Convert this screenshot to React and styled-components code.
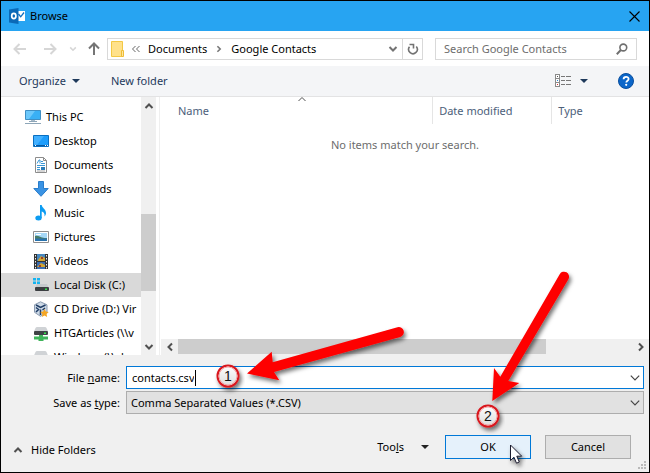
import { useState } from "react";
import styled, { createGlobalStyle, css } from "styled-components";

const GlobalStyle = createGlobalStyle`
  * {
    box-sizing: border-box;
  }
  body {
    margin: 0;
    background: #000;
  }
  body, button, input, select {
    font-family: "Noto Sans", "Open Sans", sans-serif;
    font-size: 11px;
    line-height: 16px;
    color: #000;
  }
`;

const Window = styled.div`
  position: relative;
  display: flex;
  flex-direction: column;
  height: 100vh;
  min-height: 360px;
  border: 1px solid #000;
  background: #f0f0f0;
  overflow: hidden;
`;

const PlainButton = styled.button`
  display: flex;
  align-items: center;
  padding: 0;
  border: 0;
  background: none;
  white-space: nowrap;
`;

/* title bar */

const TitleBar = styled.header`
  display: flex;
  align-items: center;
  gap: 5px;
  height: 30px;
  padding: 0 9px 0 8px;
  background: #27a4f2;
`;

const Title = styled.h1`
  flex: 1;
  margin: 0;
  font-size: 11px;
  font-weight: 400;
`;

/* address row */

const NavBar = styled.nav`
  display: flex;
  align-items: center;
  height: 35px;
  padding: 0 12px 0 5px;
  background: #fff;
`;

const NavButton = styled(PlainButton)`
  justify-content: center;
  width: ${(p) => p.$width}px;
  height: 22px;
`;

const AddressBar = styled.div`
  display: flex;
  align-items: center;
  flex: 1;
  height: 22px;
  margin-right: 12px;
  border: 1px solid #d9d9d9;
`;

const Crumbs = styled.div`
  display: flex;
  align-items: center;
  flex: 1;
  gap: 8px;
  padding-left: 3px;
`;

const RefreshButton = styled(NavButton)`
  height: 20px;
  border-left: 1px solid #d9d9d9;
`;

const SearchBox = styled.label`
  display: flex;
  align-items: center;
  flex: 0 1 202px;
  min-width: 0;
  height: 22px;
  padding: 0 8px;
  border: 1px solid #d9d9d9;
`;

const SearchInput = styled.input`
  flex: 1;
  min-width: 0;
  padding: 0;
  border: 0;
  outline: 0;
  background: none;

  &::placeholder {
    color: #6d6d6d;
    opacity: 1;
  }
`;

/* command bar */

const Toolbar = styled.div`
  display: flex;
  align-items: center;
  height: 31px;
  padding: 0 15px 0 18px;
  border-bottom: 1px solid #e3e3e4;
  background: #f4f5f7;
`;

const ToolbarButton = styled(PlainButton)`
  gap: ${(p) => p.$gap || 0}px;
  margin-right: ${(p) => p.$after || 0}px;
  color: #1e395b;
`;

const Spacer = styled.div`
  flex: 1;
`;

/* folder tree and file list */

const Body = styled.main`
  display: flex;
  flex: 1;
  min-height: 0;
  background: #fff;
`;

const Tree = styled.ul`
  flex: 0 0 140px;
  margin: 0;
  padding: 8px 0 0;
  list-style: none;
  overflow: hidden;
`;

const TreeItem = styled.li`
  display: flex;
  align-items: center;
  gap: 5px;
  height: 24px;
  padding-left: ${(p) => (p.$root ? 24 : 32)}px;
  white-space: nowrap;
  background: ${(p) => (p.$selected ? "#d9d9d9" : "none")};

  svg {
    flex: none;
  }
`;

const ScrollTrack = styled.div`
  display: flex;
  flex-direction: ${(p) => (p.$horizontal ? "row" : "column")};
  flex: 0 0 ${(p) => (p.$horizontal ? 16 : 15)}px;
  background: #f0f0f0;
`;

const ScrollArrow = styled(PlainButton)`
  justify-content: center;
  flex: 0 0 17px;
`;

const ScrollSpace = styled.div`
  flex: ${(p) => p.$grow};
`;

const ScrollThumb = styled.div`
  flex: ${(p) => p.$grow};
  background: #cdcdcd;
  ${(p) =>
    p.$horizontal &&
    css`
      margin-bottom: 1px;
    `}
`;

const FileArea = styled.section`
  display: flex;
  flex-direction: column;
  flex: 1;
  min-width: 0;
  margin-left: 3px;
  padding-left: 1px;
  border-left: 1px solid #efefef;
`;

const ColumnRow = styled.div`
  display: flex;
  height: 27px;
`;

const Column = styled(PlainButton)`
  position: relative;
  flex: ${(p) => p.$size};
  padding-left: ${(p) => p.$pad || 6}px;
  border-right: 1px solid ${(p) => (p.$last ? "transparent" : "#e5e5e5")};
  color: #4c607a;
`;

const SortMark = styled.span`
  position: absolute;
  top: -3px;
  left: 50%;
  display: flex;
`;

const Empty = styled.p`
  flex: 1;
  margin: 0;
  padding-top: 13px;
  text-align: center;
  color: #6d6d6d;
`;

/* footer */

const Footer = styled.footer`
  padding: 11px 5px 0 16px;
  height: 117px;
`;

const Fields = styled.div`
  display: grid;
  grid-template-columns: 103px 1fr;
  grid-auto-rows: 23px;
  align-items: center;
  gap: 2px 6px;
`;

const FieldLabel = styled.label`
  text-align: right;
`;

const ComboBox = styled.div`
  display: flex;
  align-items: center;
  height: 23px;
  padding: 0 2px 0 5px;
  border: 1px solid #0078d7;
  background: #fff;
`;

/* grows with its text so that the caret stays at the end */
const NameInput = styled.input`
  field-sizing: content;
  padding: 0 1px 0 0;
  border: 0;
  border-right: 1px solid #000;
  outline: 0;
  background: none;
  caret-color: transparent;
`;

const SelectBox = styled.div`
  display: grid;
  align-items: center;

  > * {
    grid-area: 1 / 1;
  }
  > svg {
    justify-self: end;
    margin-right: 3px;
    pointer-events: none;
  }
`;

const TypeSelect = styled.select`
  appearance: none;
  width: 100%;
  height: 23px;
  padding: 0 4px;
  border: 1px solid #adadad;
  border-radius: 0;
  background: #e1e1e1;
`;

const Actions = styled.div`
  display: flex;
  align-items: center;
  gap: 14px;
  height: 24px;
  margin-top: 21px;
  padding-right: 13px;
`;

const HideButton = styled(PlainButton)`
  gap: 8px;
  margin: 6px auto 0 -4px;
`;

const ToolsButton = styled(PlainButton)`
  gap: 17px;
  margin-right: 2px;
`;

const DialogButton = styled.button`
  width: 86px;
  height: 24px;
  padding: 0;
  border: 1px solid ${(p) => (p.$primary ? "#0078d7" : "#adadad")};
  background: ${(p) => (p.$primary ? "#e5f1fb" : "#e1e1e1")};
`;

const Grip = styled.svg`
  position: absolute;
  right: 2px;
  bottom: 2px;
`;

const Markup = styled.svg`
  position: absolute;
  top: -1px;
  left: -1px;
  pointer-events: none;
`;

/* small glyphs */

const chevrons = {
  up: "M1.5 7 5 3.5 8.5 7",
  down: "M1.5 3 5 6.5 8.5 3",
  left: "M7 1.5 3.5 5 7 8.5",
  right: "M3 1.5 6.5 5 3 8.5",
};

const Chevron = ({ dir, size = 10, color = "#505050", weight = 2 }) => (
  <svg width={size} height={size} viewBox="0 0 10 10" fill="none" stroke={color} strokeWidth={weight}>
    <path d={chevrons[dir]} />
  </svg>
);

const Triangle = ({ color = "#1e395b" }) => (
  <svg width="8" height="4" viewBox="0 0 8 4" fill={color}>
    <path d="M0 0h8L4 4z" />
  </svg>
);

const Arrow = ({ d, color }) => (
  <svg width="14" height="14" viewBox="0 0 14 14" fill="none" stroke={color} strokeWidth="2">
    <path d={d} />
  </svg>
);

const OutlookIcon = () => (
  <svg width="16" height="16" viewBox="0 0 16 16">
    <path d="M8 3h8v10H8z" fill="#fff" />
    <path d="m9.5 6 2.2 2.800L15 4.500" fill="none" stroke="#0f6fc0" strokeWidth="1.300" />
    <path d="M0 1.500 9.500 0v16L0 14.500z" fill="#0b69b7" />
    <ellipse cx="4.800" cy="8" rx="2.100" ry="2.600" fill="none" stroke="#fff" strokeWidth="1.700" />
  </svg>
);

const CloseIcon = () => (
  <svg width="11" height="11" viewBox="0 0 11 11" stroke="#000" strokeWidth="1.1">
    <path d="m.5.5 10 10M10.500.5l-10 10" />
  </svg>
);

const FolderIcon = () => (
  <svg width="13" height="16" viewBox="1 0 13 16">
    <path d="M1.500.5h11v15h-11z" fill="#ffe18b" stroke="#f3c845" />
    <path d="M11.500 9.500h2v6h-2z" fill="#ffe69d" stroke="#efbd36" />
  </svg>
);

const RefreshIcon = () => (
  <svg width="12" height="12" viewBox="0 0 12 12" fill="none" stroke="#737373" strokeWidth="1.6">
    <path d="M9.300 3.600A4.300 4.300 0 1 1 2.500 3.800" />
    <path d="M2.500 1.500h4v4" />
  </svg>
);

const SearchIcon = () => (
  <svg width="12" height="12" viewBox="0 0 12 12" fill="none" stroke="#6f6f6f">
    <circle cx="7.300" cy="4.500" r="3.400" strokeWidth="1.600" />
    <path d="M4.800 7 .8 11.200" strokeWidth="2" />
  </svg>
);

const ViewIcon = () => (
  <svg width="17" height="14" viewBox="0 0 17 14" shapeRendering="crispEdges">
    <path d="M.5.5h4v12h-4zM.5 4.500h4M.5 8.500h4" fill="#fff" stroke="#8a8a8a" />
    <path d="M2 2h1v1H2z" fill="#555" />
    <path d="M2 6h1v1H2z" fill="#2a86d8" />
    <path d="M2 10h1v1H2z" fill="#d33" />
    <path d="M6 2.500h4m1 0h5M6 6.500h4m1 0h5M6 10.500h4m1 0h5" stroke="#777" />
  </svg>
);

const HelpIcon = () => (
  <svg width="16" height="16" viewBox="0 0 16 16">
    <circle cx="8" cy="8" r="7.500" fill="#0b66c9" stroke="#0a4f9e" />
    <path d="M5.600 6.200c0-3.200 5-3.100 5-.2 0 1.700-2.300 1.800-2.300 3.500" fill="none" stroke="#fff" strokeWidth="1.800" />
    <circle cx="8.200" cy="11.800" r="1.100" fill="#fff" />
  </svg>
);

/* tree icons, all on a 16px grid */

const treeIcons = {
  pc: (
    <>
      <path d="M.5 1.500h15v9H.5z" fill="#39b0f5" stroke="#3f8fc4" />
      <path d="M1 2h9l-6 8H1z" fill="#6cc8fb" />
      <path d="M6 11h4v1H6z" fill="#a9bccb" />
      <path d="M4 12.500h8M0 14.500h16" stroke="#8ea6b8" />
    </>
  ),
  desktop: (
    <>
      <path d="M.5 2.500h15v11H.5z" fill="#1e9dfb" stroke="#0a6fc0" />
      <path d="M1 3h10L4 12H1z" fill="#42b0ff" />
      <path d="M1 12.500h14" stroke="#07589f" />
      <path d="M2 12.500h1m9 0h1m1 0h1" stroke="#fff" />
    </>
  ),
  document: (
    <>
      <path d="M2.500.5h8l3 3v12h-11z" fill="#fff" stroke="#8c8c8c" />
      <path d="M10.500.5v3h3" fill="none" stroke="#8c8c8c" />
      <path d="M4 6.500 6 3h1v3.500M8 4.500h2M4 8.500h8M4 10.500h3M4 12.500h3M8 6.500h4" fill="none" stroke="#3a97d6" />
      <path d="M8 10h4v3H8z" fill="#2b7cb8" />
      <path d="M4 14h8" stroke="#aaa" />
    </>
  ),
  download: <path d="M5.500.5h5v7h4.700L8 15.300.8 7.500h4.700z" fill="#3a93e4" stroke="#2a7dcb" />,
  music: (
    <>
      <ellipse cx="5.500" cy="13" rx="3.200" ry="2.500" fill="#0c9cf2" />
      <path d="M7 0h1.700c.3 3 4.300 4 4.300 8 0 1.500-.7 2.500-1.500 3.500.5-3-1-4.500-2.800-5V13H7z" fill="#0c9cf2" />
    </>
  ),
  picture: (
    <>
      <path d="M.5 2.500h15v11H.5z" fill="#fff" stroke="#8f8f8f" />
      <path d="M2 4h12v8H2z" fill="#a5d8f8" />
      <path d="M2 7c3-1 5 1 7 1.500s3 .5 5 .5v1H2z" fill="#487d68" />
      <path d="M2 9.500h12V12H2z" fill="#2872ad" />
      <path d="M3 5.500h5" stroke="#fff" />
    </>
  ),
  video: (
    <>
      <path d="M1 1h14v15H1z" fill="#333" />
      <path d="M4 1h8v7H4z" fill="#4787bd" />
      <path d="M4 9h8v7H4z" fill="#3b6db0" />
      <path d="m5 7 3-4 4 2v3H5zM4 14l4-4 4 2v2z" fill="#d1a531" />
      <path d="M8 4h2v2H8zM6 12h2v2H6z" fill="#9d3e28" />
      <path d="M2.500 2v14M13.500 2v14" stroke="#eee" strokeDasharray="1.500 1.500" />
    </>
  ),
  disk: (
    <>
      <path d="M0 1h3v2.500H0zM4 1h3v2.500H4zM0 4.500h3V7H0zM4 4.500h3V7H4z" fill="#14b4f1" />
      <path d="M4 7h10l1.500 3.500h-13z" fill="#c6c9cc" />
      <rect x="2" y="10" width="14" height="4" rx="1" fill="#3b3e41" />
      <path d="M12 11.500h2V13h-2z" fill="#35e24f" />
    </>
  ),
  cd: (
    <>
      <path d="m7.500.8 6.500 3v7.500l-6.500 4-6-4V3.800z" fill="#cdd9e6" stroke="#8b9bb0" />
      <path d="m3 4 4.500 2.500L12.500 4M3 6.500l2.500 2L3 11m4.500-2.500V14M12 7l-2.500 2" fill="none" stroke="#1f3d66" strokeWidth="1.500" />
      <path d="m11.500 8 1.300 2.600 2.900.4-2.100 2 .5 2.900-2.600-1.400-2.600 1.400.5-2.900-2.100-2 2.900-.4z" fill="#f5a623" />
    </>
  ),
  network: (
    <>
      <path d="M4 2h8q1 0 1.500 1L15 6.500H1L2.500 3Q3 2 4 2z" fill="#d0d3d6" />
      <rect x="1" y="6" width="14" height="4" rx="1" fill="#3f4245" />
      <path d="M11 7.500h2V9h-2z" fill="#35e24f" />
      <path d="M6 10h4v1.500h5v3h-4.500V16h-5v-1.500H1v-3h5z" fill="#3fb45a" />
    </>
  ),
};

const places = [
  { icon: "pc", name: "This PC", root: true },
  { icon: "desktop", name: "Desktop" },
  { icon: "document", name: "Documents" },
  { icon: "download", name: "Downloads" },
  { icon: "music", name: "Music" },
  { icon: "picture", name: "Pictures" },
  { icon: "video", name: "Videos" },
  { icon: "disk", name: "Local Disk (C:)" },
  { icon: "cd", name: "CD Drive (D:) Vir" },
  { icon: "network", name: "HTGArticles (\\\\v" },
  { icon: "network", name: "Windows (\\\\vb" },
];

const Step = ({ x, y, n }) => (
  <g>
    <circle cx={x} cy={y} r="10.500" fill="url(#badge)" stroke="#d9141c" strokeWidth="2" filter="url(#shadow)" />
    <circle cx={x} cy={y} r="9" fill="none" stroke="#f5a3a3" />
    <text x={x} y={y + 5} textAnchor="middle" fontSize="14" fontFamily="Liberation Sans, sans-serif" fill="#111">
      {n}
    </text>
  </g>
);

export default function App() {
  const [selected, setSelected] = useState("Local Disk (C:)");
  const [fileName, setFileName] = useState("contacts.csv");

  return (
    <>
      <GlobalStyle />
      <Window>
        <TitleBar>
          <OutlookIcon />
          <Title>Browse</Title>
          <PlainButton aria-label="Close">
            <CloseIcon />
          </PlainButton>
        </TitleBar>

        <NavBar>
          <NavButton $width={28} aria-label="Back">
            <Arrow color="#d6d6d6" d="M13 7H2M6.500 2 1.500 7l5 5" />
          </NavButton>
          <NavButton $width={32} aria-label="Forward">
            <Arrow color="#d6d6d6" d="M1 7h11M7.500 2l5 5-5 5" />
          </NavButton>
          <NavButton $width={14} aria-label="Recent locations">
            <Chevron dir="down" size={8} color="#d6d6d6" />
          </NavButton>
          <NavButton $width={27} aria-label="Up">
            <Arrow color="#757575" d="M7 13V2M2 6.500l5-5 5 5" />
          </NavButton>
          <AddressBar>
            <Crumbs>
              <FolderIcon />
              <svg width="8" height="10" viewBox="1 0 8 10" fill="none" stroke="#666">
                <path d="M4.500 2 1.500 5l3 3M8.500 2l-3 3 3 3" />
              </svg>
              <PlainButton>Documents</PlainButton>
              <Chevron dir="right" size={8} color="#777" />
              <PlainButton>Google Contacts</PlainButton>
            </Crumbs>
            <NavButton $width={18} aria-label="Previous locations">
              <Chevron dir="down" color="#737373" />
            </NavButton>
            <RefreshButton $width={20} aria-label="Refresh">
              <RefreshIcon />
            </RefreshButton>
          </AddressBar>
          <SearchBox>
            <SearchInput aria-label="Search" placeholder="Search Google Contacts" />
            <SearchIcon />
          </SearchBox>
        </NavBar>

        <Toolbar>
          <ToolbarButton $gap={6} $after={31}>
            Organize <Triangle />
          </ToolbarButton>
          <ToolbarButton>New folder</ToolbarButton>
          <Spacer />
          <ToolbarButton $gap={8} $after={30} aria-label="Change view">
            <ViewIcon />
            <Triangle />
          </ToolbarButton>
          <ToolbarButton aria-label="Help">
            <HelpIcon />
          </ToolbarButton>
        </Toolbar>

        <Body>
          <Tree>
            {places.map((p) => (
              <TreeItem
                key={p.name}
                $root={p.root}
                $selected={p.name === selected}
                onClick={() => setSelected(p.name)}
              >
                <svg width="16" height="16" viewBox="0 0 16 16">
                  {treeIcons[p.icon]}
                </svg>
                {p.name}
              </TreeItem>
            ))}
          </Tree>
          <ScrollTrack>
            <ScrollArrow aria-label="Scroll up">
              <Chevron dir="up" />
            </ScrollArrow>
            <ScrollSpace $grow={100} />
            <ScrollThumb $grow={77} />
            <ScrollSpace $grow={47} />
            <ScrollArrow aria-label="Scroll down">
              <Chevron dir="down" />
            </ScrollArrow>
          </ScrollTrack>

          <FileArea>
            <ColumnRow>
              <Column $size={272} $pad={17}>
                Name
                <SortMark>
                  <Chevron dir="up" weight={1} />
                </SortMark>
              </Column>
              <Column $size={120}>Date modified</Column>
              <Column $size={96} $last>
                Type
              </Column>
            </ColumnRow>
            <Empty>No items match your search.</Empty>
            <ScrollTrack $horizontal>
              <ScrollArrow aria-label="Scroll left">
                <Chevron dir="left" />
              </ScrollArrow>
              <ScrollThumb $grow={368} $horizontal />
              <ScrollSpace $grow={86} />
              <ScrollArrow aria-label="Scroll right">
                <Chevron dir="right" />
              </ScrollArrow>
            </ScrollTrack>
          </FileArea>
        </Body>

        <Footer>
          <Fields>
            <FieldLabel htmlFor="file-name">
              File <u>n</u>ame:
            </FieldLabel>
            <ComboBox>
              <NameInput id="file-name" value={fileName} onChange={(e) => setFileName(e.target.value)} />
              <Spacer />
              <PlainButton aria-label="Recent names">
                <Chevron dir="down" size={12} color="#444" weight={1} />
              </PlainButton>
            </ComboBox>
            <FieldLabel htmlFor="file-type">
              Save as <u>t</u>ype:
            </FieldLabel>
            <SelectBox>
              <TypeSelect id="file-type">
                <option>Comma Separated Values (*.CSV)</option>
              </TypeSelect>
              <Chevron dir="down" size={12} color="#444" weight={1} />
            </SelectBox>
          </Fields>
          <Actions>
            <HideButton>
              <Chevron dir="up" />
              Hide Folders
            </HideButton>
            <ToolsButton>
              <span>
                Too<u>l</u>s
              </span>
              <Triangle color="#222" />
            </ToolsButton>
            <DialogButton $primary>OK</DialogButton>
            <DialogButton>Cancel</DialogButton>
          </Actions>
        </Footer>

        <Grip width="9" height="9" viewBox="0 0 9 9" fill="#b9b9b9">
          <path d="M6 0h2v2H6zM3 3h2v2H3zM6 3h2v2H6zM0 6h2v2H0zM3 6h2v2H3zM6 6h2v2H6z" />
        </Grip>

        <Markup width="650" height="473" viewBox="0 0 650 473">
          <defs>
            <filter id="shadow" x="-30%" y="-30%" width="160%" height="170%">
              <feDropShadow dx="2" dy="3" stdDeviation="2" floodColor="#000" floodOpacity="0.55" />
            </filter>
            <linearGradient id="badge" x1="0" y1="0" x2="0" y2="1">
              <stop offset="0" stopColor="#fff" />
              <stop offset="1" stopColor="#dcdcdc" />
            </linearGradient>
          </defs>
          <g fill="#fe0000" filter="url(#shadow)">
            <path d="M247 373.500 271.700 351.700 272.700 362.300 397.500 327.200A5 5 0 0 1 400.200 336.900L274 372 279.300 380.300z" />
            <path d="M492.300 401 494 368 500.300 376.700 559.700 274.200A5 5 0 0 1 568.400 279.200L508.300 381 519.300 383z" />
          </g>
          <Step x={228} y={376} n="1" />
          <Step x={488} y={416} n="2" />
          <path
            d="M510.500 445v15.500l3.500-3.300 2.500 6 2.800-1.200-2.500-5.800h4.900z"
            fill="#fff"
            stroke="#1a1a2e"
            filter="url(#shadow)"
          />
        </Markup>
      </Window>
    </>
  );
}
